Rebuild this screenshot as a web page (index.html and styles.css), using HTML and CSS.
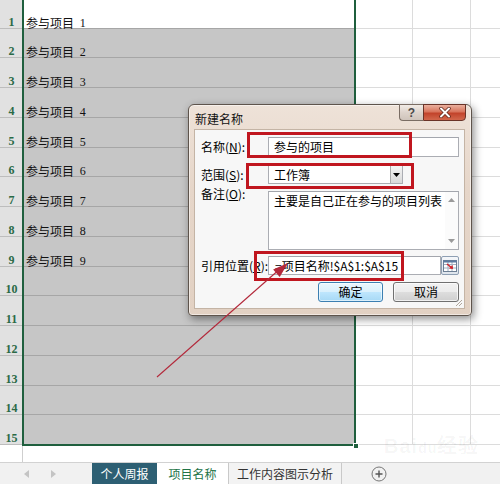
FILE: index.html
```html
<!DOCTYPE html>
<html lang="zh-CN">
<head>
<meta charset="utf-8">
<title>新建名称</title>
<link rel="stylesheet" href="styles.css">
</head>
<body>
<div class="screen">
  <div class="sheet">
    <div class="row first">
      <div class="rh">1</div>
      <div class="ca active">参与项目 <span class="n">1</span></div>
      <div class="c"></div><div class="c"></div><div class="c"></div>
    </div>
    <div class="row"><div class="rh">2</div><div class="ca">参与项目 <span class="n">2</span></div><div class="c"></div><div class="c"></div><div class="c"></div></div>
    <div class="row"><div class="rh">3</div><div class="ca">参与项目 <span class="n">3</span></div><div class="c"></div><div class="c"></div><div class="c"></div></div>
    <div class="row"><div class="rh">4</div><div class="ca">参与项目 <span class="n">4</span></div><div class="c"></div><div class="c"></div><div class="c"></div></div>
    <div class="row"><div class="rh">5</div><div class="ca">参与项目 <span class="n">5</span></div><div class="c"></div><div class="c"></div><div class="c"></div></div>
    <div class="row"><div class="rh">6</div><div class="ca">参与项目 <span class="n">6</span></div><div class="c"></div><div class="c"></div><div class="c"></div></div>
    <div class="row"><div class="rh">7</div><div class="ca">参与项目 <span class="n">7</span></div><div class="c"></div><div class="c"></div><div class="c"></div></div>
    <div class="row"><div class="rh">8</div><div class="ca">参与项目 <span class="n">8</span></div><div class="c"></div><div class="c"></div><div class="c"></div></div>
    <div class="row"><div class="rh">9</div><div class="ca">参与项目 <span class="n">9</span></div><div class="c"></div><div class="c"></div><div class="c"></div></div>
    <div class="row"><div class="rh">10</div><div class="ca"></div><div class="c"></div><div class="c"></div><div class="c"></div></div>
    <div class="row"><div class="rh">11</div><div class="ca"></div><div class="c"></div><div class="c"></div><div class="c"></div></div>
    <div class="row"><div class="rh">12</div><div class="ca"></div><div class="c"></div><div class="c"></div><div class="c"></div></div>
    <div class="row"><div class="rh">13</div><div class="ca"></div><div class="c"></div><div class="c"></div><div class="c"></div></div>
    <div class="row"><div class="rh">14</div><div class="ca"></div><div class="c"></div><div class="c"></div><div class="c"></div></div>
    <div class="row"><div class="rh">15</div><div class="ca"></div><div class="c"></div><div class="c"></div><div class="c"></div></div>
    <div class="tail"><div class="tail-h"></div></div>
  </div>

  <div class="tabs">
    <div class="nav">
      <svg width="6" height="8" viewBox="0 0 6 8"><path d="M5 0 L0 4 L5 8 Z" fill="#c4c4c4"/></svg>
      <svg width="6" height="8" viewBox="0 0 6 8"><path d="M1 0 L6 4 L1 8 Z" fill="#c4c4c4"/></svg>
    </div>
    <div class="tab tab-dark">个人周报</div>
    <div class="tab tab-active">项目名称</div>
    <div class="tab tab-plain">工作内容图示分析</div>
    <div class="add">
      <svg width="16" height="16" viewBox="0 0 16 16"><circle cx="8" cy="8" r="7" fill="none" stroke="#777" stroke-width="1"/><path d="M8 4.5v7M4.5 8h7" stroke="#555" stroke-width="1.4"/></svg>
    </div>
  </div>

  <div class="sel"><span class="handle"></span></div>

  <div class="mark">Bai<span class="paw">du</span>经验</div>

  <div class="dlg">
    <div class="ttl">
      <span class="ttl-text">新建名称</span>
      <div class="caps">
        <div class="cap help">?</div>
        <div class="cap close">
          <svg width="14" height="11" viewBox="0 0 14 11"><path d="M3 1.5 L11 9.5 M11 1.5 L3 9.5" stroke="#5a2218" stroke-width="3.4" stroke-linecap="round"/><path d="M3 1.5 L11 9.5 M11 1.5 L3 9.5" stroke="#fff" stroke-width="2" stroke-linecap="round"/></svg>
        </div>
      </div>
    </div>
    <div class="client">
      <div class="frow r1">
        <label class="lbl">名称(<u>N</u>):</label>
        <div class="box wide">参与的项目</div>
      </div>
      <div class="frow r2">
        <label class="lbl">范围(<u>S</u>):</label>
        <div class="box sel-box">工作簿<span class="dd"><svg width="7" height="4" viewBox="0 0 7 4"><path d="M0 0h7L3.5 4z" fill="#000"/></svg></span></div>
      </div>
      <div class="frow r3">
        <label class="lbl top">备注(<u>O</u>):</label>
        <div class="box area">主要是自己正在参与的项目列表<span class="vs"><svg width="7" height="4" viewBox="0 0 7 4"><path d="M0 4h7L3.5 0z" fill="#9a9a9a"/></svg><svg width="7" height="4" viewBox="0 0 7 4"><path d="M0 0h7L3.5 4z" fill="#9a9a9a"/></svg></span></div>
      </div>
      <div class="frow r4">
        <label class="lbl">引用位置(<u>R</u>):</label>
        <div class="box ref">=项目名称!$A$1:$A$15</div>
        <div class="refbtn">
          <svg width="16" height="16" viewBox="0 0 16 16">
            <rect x="1.5" y="2.5" width="13" height="11" fill="#fff" stroke="#6d7f94"/>
            <path d="M2 6.5h12M2 10h12M6 3v10M10 3v10" stroke="#9fb0c2" stroke-width="1"/>
            <rect x="1.5" y="2.5" width="13" height="2" fill="#5b7aa0"/>
            <path d="M5 6 L10 10" stroke="#d2232a" stroke-width="1.6"/>
            <path d="M11 11 L7 10.6 L10.6 7 Z" fill="#d2232a"/>
          </svg>
        </div>
      </div>
      <div class="frow r5">
        <button class="btn ok">确定</button>
        <button class="btn">取消</button>
      </div>
      <svg class="grip" width="8" height="8" viewBox="0 0 8 8"><path d="M7 1 L1 7 M7 4 L4 7" stroke="#b0a69c" stroke-width="1"/></svg>
    </div>
  </div>

  <div class="hl hl1"></div>
  <div class="hl hl2"></div>
  <div class="hl hl3"></div>

  <svg class="arrow" width="500" height="484" viewBox="0 0 500 484">
    <path d="M157 377 L281 268" stroke="#b3283a" stroke-width="1.1" fill="none"/>
    <path d="M288 263 L279.7 277 L273.1 269.4 Z" fill="#b3283a"/>
  </svg>
</div>
</body>
</html>
```
FILE: styles.css
```css
* { box-sizing: border-box; margin: 0; padding: 0; }
html, body { width: 500px; height: 484px; overflow: hidden; background: #fff; }
body {
  font-family: "Noto Sans CJK SC", "Noto Sans", sans-serif;
  font-size: 12px;
  color: #000;
}
.screen { position: relative; width: 500px; height: 484px; overflow: hidden; }

/* sheet grid */
.sheet { display: flex; flex-direction: column; }
.row { display: flex; height: 29.75px; flex: none; }
.row.first { height: 28.5px; }
.rh {
  width: 23px; flex: none;
  background: #e1e1e1;
  border-bottom: 1px solid #bdbdbd;
  font: bold 12px/10px "Liberation Serif", serif;
  color: #2a6a46;
  display: flex; align-items: flex-end; justify-content: center;
  padding-bottom: 1px;
}
.ca {
  width: 332px; flex: none;
  background: #c6c6c6;
  border-bottom: 1px solid #a6a6a6;
  border-right: 1px solid #a6a6a6;
  display: flex; align-items: flex-end;
  padding: 0 0 0 3px;
  line-height: 10px;
  white-space: pre;
  color: #111;
}
.ca.active { background: #fff; }
.n { font-family: "Liberation Serif", serif; margin-left: 3px; }
.c {
  width: 58px; flex: none;
  border-bottom: 1px solid #dcdcdc;
  border-right: 1px solid #dcdcdc;
}
.tail { height: 17px; display: flex; }
.tail-h { width: 23px; border-right: 1px solid #cfcfcf; }

/* tabs */
.tabs {
  height: 22px;
  display: flex;
  background: #f1f1f1;
  border-top: 1px solid #d2d2d2;
}
.nav { width: 92px; display: flex; align-items: center; gap: 20px; padding-left: 24px; }
.tab { display: flex; align-items: center; justify-content: center; font-size: 12px; height: 21px; }
.tab-dark { width: 65px; background: #2d5f73; color: #fff; }
.tab-active { width: 71px; background: #fff; color: #217346; }
.tab-plain { width: 114px; background: #f3f3f3; color: #333; border-left: 1px solid #c9c9c9; border-right: 1px solid #c9c9c9; }
.add { margin-left: 29px; display: flex; align-items: center; }

/* selection border over A1:A15 */
.sel {
  position: absolute; left: 22px; top: -2px; width: 334px; height: 448px;
  border: 2px solid #1f5f3e;
}
.handle {
  position: absolute; right: -5px; bottom: -5px; width: 6px; height: 6px;
  background: #1f5f3e; border: 1px solid #fff;
}

.mark {
  position: absolute; left: 384px; top: 436px;
  font: bold 20px/20px "Liberation Sans", sans-serif;
  color: rgba(0,0,0,0.045);
  letter-spacing: 1px;
}
.mark .paw { font-size: 14px; }

/* dialog */
.dlg {
  position: absolute; left: 188px; top: 104px; width: 284px; height: 212px;
  border: 1px solid #5e544c;
  border-radius: 6px 6px 4px 4px;
  background: linear-gradient(180deg, #eee2d8 0%, #e6d6c9 40%, #e2d1c3 100%);
  box-shadow: 2px 3px 8px rgba(0,0,0,0.45), inset 0 0 0 1px rgba(255,255,255,0.5);
  padding: 0 6px 6px 5px;
  display: flex; flex-direction: column;
}
.ttl { height: 24px; display: flex; align-items: flex-start; }
.ttl-text { margin: 5px 0 0 1px; font-size: 12px; color: #111; }
.caps { margin-left: auto; margin-right: -1px; margin-top: -1px; display: flex; }
.cap { height: 17px; display: flex; align-items: center; justify-content: center; }
.help {
  width: 24px;
  border: 1px solid #7a6d64;
  border-right: none;
  border-radius: 0 0 0 4px;
  background: linear-gradient(180deg, #f1ebe6 0%, #ddd3cb 50%, #cfc4bb 100%);
  font: bold 12px/12px "Liberation Sans", sans-serif;
  color: #4a4a4a;
}
.close {
  width: 43px;
  border: 1px solid #6a3328;
  border-radius: 0 0 4px 0;
  background: linear-gradient(180deg, #eab09e 0%, #d8745c 45%, #c2432b 55%, #d2674c 100%);
}
.client {
  position: relative;
  flex: 1;
  background: #f7f7f7;
  border: 1px solid #c4b4a5;
  padding: 7px 5px 0 6px;
  display: flex; flex-direction: column;
}
.frow { display: flex; align-items: center; }
.r2 { margin-top: 8px; }
.r3 { margin-top: 7px; align-items: flex-start; }
.r4 { margin-top: 6px; }
.r5 { margin-top: 7px; justify-content: flex-end; gap: 10px; }
.lbl { width: 67px; flex: none; font-size: 12px; line-height: 14px; color: #000; white-space: nowrap; }
.lbl.top { margin-top: -4px; }
.box {
  position: relative;
  background: #fff;
  border: 1px solid #abadb3;
  border-top-color: #a3a6ad;
  font-size: 12px;
  line-height: 14px;
  padding-left: 5px;
  display: flex; align-items: center;
  color: #000;
}
.wide { width: 191px; height: 20px; }
.sel-box { width: 135px; height: 19px; }
.dd {
  position: absolute; right: 0; top: 0; bottom: 0; width: 12px;
  background: linear-gradient(180deg, #f4f4f4, #d9d9d9);
  border-left: 1px solid #aaa;
  display: flex; align-items: center; justify-content: center;
}
.area { width: 192px; height: 59px; align-items: flex-start; padding-top: 2px; }
.vs {
  position: absolute; right: 0; top: 0; bottom: 0; width: 13px;
  background: #fbfbfb;
  display: flex; flex-direction: column; justify-content: space-between; align-items: center;
  padding: 6px 0 6px;
}
.ref { width: 173px; height: 19px; padding-left: 6px; }
.refbtn {
  width: 18px; height: 19px; margin-left: 0;
  border: 1px solid #8e9fb3;
  border-radius: 2px;
  background: linear-gradient(180deg, #f5f7fa, #dde4ec);
  display: flex; align-items: center; justify-content: center;
}
.btn {
  width: 66px; height: 20px;
  font: 12px/14px "Noto Sans CJK SC", sans-serif;
  color: #000;
  border: 1px solid #707070;
  border-radius: 3px;
  background: linear-gradient(180deg, #f2f2f2 0%, #ebebeb 50%, #dddddd 51%, #cfcfcf 100%);
  box-shadow: inset 0 0 0 1px rgba(255,255,255,0.7);
}
.btn.ok {
  width: 65px;
  border-color: #3c7fb1;
  background: linear-gradient(180deg, #eaf6fd 0%, #d9f0fc 50%, #bee6fd 51%, #a7d9f5 100%);
  box-shadow: inset 0 0 0 1px rgba(255,255,255,0.6);
}
.grip { position: absolute; right: 1px; bottom: 1px; }

/* red highlight annotations */
.hl { position: absolute; border: 3px solid #c0161f; }
.hl1 { left: 247px; top: 132px; width: 165px; height: 26px; }
.hl2 { left: 246px; top: 163px; width: 168px; height: 26px; }
.hl3 { left: 254px; top: 251px; width: 150px; height: 30px; }

.arrow { position: absolute; left: 0; top: 0; pointer-events: none; }
```
